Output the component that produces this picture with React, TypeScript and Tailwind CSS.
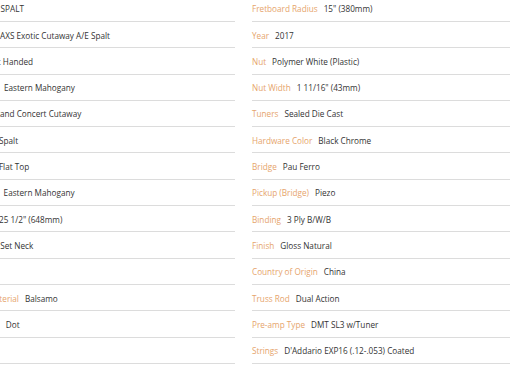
const left: [string, string][] = [
  ["Vendor Code", "SPALT"],
  ["Model Name", "AXS Exotic Cutaway A/E Spalt"],
  ["Handed", "Right Handed"],
  ["Body Material", "Eastern Mahogany"],
  ["Body Style", "Grand Concert Cutaway"],
  ["Top Material", "Spalt"],
  ["Top Contour", "Flat Top"],
  ["Neck Material", "Eastern Mahogany"],
  ["Scale Length", "25 1/2\" (648mm)"],
  ["Construction", "Set Neck"],
  ["Frets", ""],
  ["Fret Board Material", "Balsamo"],
  ["Position Inlays", "Dot"],
  ["Scale", ""],
];

const right: [string, string][] = [
  ["Fretboard Radius", "15\" (380mm)"],
  ["Year", "2017"],
  ["Nut", "Polymer White (Plastic)"],
  ["Nut Width", "1 11/16\" (43mm)"],
  ["Tuners", "Sealed Die Cast"],
  ["Hardware Color", "Black Chrome"],
  ["Bridge", "Pau Ferro"],
  ["Pickup (Bridge)", "Piezo"],
  ["Binding", "3 Ply B/W/B"],
  ["Finish", "Gloss Natural"],
  ["Country of Origin", "China"],
  ["Truss Rod", "Dual Action"],
  ["Pre-amp Type", "DMT SL3 w/Tuner"],
  ["Strings", "D'Addario EXP16 (.12-.053) Coated"],
];

const SpecRow = ({ label, value }: { label: string; value: string }) => (
  <div className="flex h-[26.3px] items-center gap-[6px] whitespace-nowrap border-b border-[#dcdcdc] pt-[2px]">
    <span className="text-[#e6a46c]">{label}</span>
    {value && <span className="text-[#333333]">{value}</span>}
  </div>
);

export default function App() {
  return (
    <div className="h-[382px] w-[510px] overflow-hidden bg-white">
      <div
        className="ml-[-55px] mt-[-4.3px] flex gap-[17px] text-[8.2px] leading-none"
        style={{ fontFamily: '"Open Sans", "Noto Sans", sans-serif' }}
      >
        <div className="w-[290px] shrink-0">
          {left.map(([l, v]) => (
            <SpecRow key={l} label={l} value={v} />
          ))}
        </div>
        <div className="w-[300px] shrink-0">
          {right.map(([l, v]) => (
            <SpecRow key={l} label={l} value={v} />
          ))}
        </div>
      </div>
    </div>
  );
}
